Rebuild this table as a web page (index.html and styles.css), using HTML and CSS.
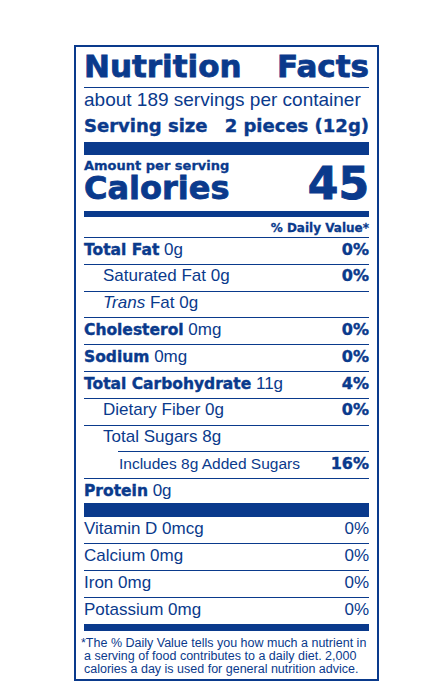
FILE: index.html
```html
<!DOCTYPE html>
<html lang="en">
<head>
    <meta charset="UTF-8">
    <title>Nutrition Facts</title>
    <link rel="stylesheet" href="styles.css">
</head>
<body>
<div class="label">
    <h1 class="title"><span>Nutrition</span><span>Facts</span></h1>
    <div class="servings">about 189 servings per container</div>
    <div class="serving-size"><span>Serving size</span><span>2 pieces (12g)</span></div>
    <div class="bar bar-thick"></div>

    <div class="calories">
        <div>
            <div class="amount">Amount per serving</div>
            <div class="calories-label">Calories</div>
        </div>
        <div class="calories-value">45</div>
    </div>
    <div class="bar bar-medium"></div>
    <div class="dv-head">% Daily Value*</div>

    <!-- nutrients -->
    <div class="row"><span><b>Total Fat</b> 0g</span><b class="pct">0%</b></div>
    <div class="row row-sub"><span>Saturated Fat 0g</span><b class="pct">0%</b></div>
    <div class="row row-sub"><span><i>Trans</i> Fat 0g</span></div>
    <div class="row"><span><b>Cholesterol</b> 0mg</span><b class="pct">0%</b></div>
    <div class="row"><span><b>Sodium</b> 0mg</span><b class="pct">0%</b></div>
    <div class="row"><span><b>Total Carbohydrate</b> 11g</span><b class="pct">4%</b></div>
    <div class="row row-sub"><span>Dietary Fiber 0g</span><b class="pct">0%</b></div>
    <div class="row row-sub"><span>Total Sugars 8g</span></div>
    <div class="row row-added"><span>Includes 8g Added Sugars</span><b class="pct">16%</b></div>
    <div class="row row-protein"><span><b>Protein</b> 0g</span></div>
    <div class="bar bar-thick bar-protein"></div>

    <!-- vitamins and minerals -->
    <div class="vitamins">
        <div class="row"><span>Vitamin D 0mcg</span><span>0%</span></div>
        <div class="row"><span>Calcium 0mg</span><span>0%</span></div>
        <div class="row"><span>Iron 0mg</span><span>0%</span></div>
        <div class="row"><span>Potassium 0mg</span><span>0%</span></div>
    </div>
    <div class="bar bar-bottom"></div>

    <p class="footnote">*The % Daily Value tells you how much a nutrient in<br>a serving of food contributes to a daily diet. 2,000<br>calories a day is used for general nutrition advice.</p>
</div>
</body>
</html>
```

FILE: styles.css
```css
* {
    box-sizing: border-box;
}

body {
    margin: 0;
    background: #fff;
    color: #0a3a8c;
    font-family: "Liberation Sans", Arial, sans-serif;
}

.label {
    width: 305px;
    margin: 45px 0 0 74px;
    border: 2px solid #0a3a8c;
    padding: 0 8px 3px 8px;
}

.title {
    display: flex;
    justify-content: space-between;
    margin: 4px 0 0 0;
    padding-bottom: 5px;
    border-bottom: 1px solid #0a3a8c;
    font: bold 31px/31px "DejaVu Sans", sans-serif;
    -webkit-text-stroke: 0.8px #0a3a8c;
}

.servings {
    margin-top: 1px;
    font-size: 19px;
    line-height: 22px;
}

.serving-size {
    display: flex;
    justify-content: space-between;
    margin-top: 4px;
    font: bold 18px/22px "DejaVu Sans", sans-serif;
    -webkit-text-stroke: 0.4px #0a3a8c;
}

.bar {
    background: #0a3a8c;
}

.bar-thick {
    height: 13px;
    margin-top: 5px;
}

.calories {
    display: flex;
    justify-content: space-between;
    align-items: flex-end;
}

.amount {
    margin-top: 4px;
    font: bold 13px/14px "DejaVu Sans", sans-serif;
    -webkit-text-stroke: 0.3px #0a3a8c;
}

.calories-label {
    font: bold 32px/30px "DejaVu Sans", sans-serif;
    -webkit-text-stroke: 0.8px #0a3a8c;
}

.calories-value {
    font: bold 44px/38px "DejaVu Sans", sans-serif;
    -webkit-text-stroke: 1px #0a3a8c;
}

.bar-medium {
    height: 6px;
    margin-top: 8px;
}

.dv-head {
    text-align: right;
    margin-top: 4px;
    padding-bottom: 2px;
    font: bold 12px/14px "DejaVu Sans", sans-serif;
    -webkit-text-stroke: 0.3px #0a3a8c;
}

.row {
    display: flex;
    justify-content: space-between;
    height: 26.8px;
    padding-top: 1.6px;
    border-top: 1px solid #0a3a8c;
    font-size: 17px;
    line-height: 20px;
    white-space: nowrap;
}

.row b {
    font: bold 15.5px/20px "DejaVu Sans", sans-serif;
    -webkit-text-stroke: 0.4px #0a3a8c;
}

.row .pct {
    font-size: 16px;
}

.row-sub {
    padding-left: 19px;
}

.row-added {
    margin-left: 34px;
    padding-left: 1px;
    font-size: 15.5px;
}

.row-protein {
    height: 25px;
}

.bar-protein {
    height: 14px;
    margin-top: 0;
}

.vitamins .row {
    height: 27px;
}

.vitamins .row:first-child {
    height: 26px;
    border-top: none;
}

.bar-bottom {
    height: 7px;
}

.footnote {
    margin: 6px 0 0 0;
    font-size: 12.5px;
    line-height: 13px;
    text-indent: -3px;
    white-space: nowrap;
}
```
